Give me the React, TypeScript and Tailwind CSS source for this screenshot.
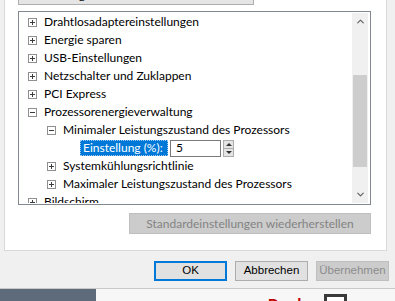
import { ChevronUp, ChevronDown } from "lucide-react";

type Row = { label: string; level: number; open?: boolean; leaf?: boolean };

const rows: Row[] = [
  { label: "Drahtlosadaptereinstellungen", level: 0 },
  { label: "Energie sparen", level: 0 },
  { label: "USB-Einstellungen", level: 0 },
  { label: "Netzschalter und Zuklappen", level: 0 },
  { label: "PCI Express", level: 0 },
  { label: "Prozessorenergieverwaltung", level: 0, open: true },
  { label: "Minimaler Leistungszustand des Prozessors", level: 1, open: true },
  { label: "Einstellung (%):", level: 2, leaf: true },
  { label: "Systemkühlungsrichtlinie", level: 1 },
  { label: "Maximaler Leistungszustand des Prozessors", level: 1 },
  { label: "Bildschirm", level: 0 },
];

function Expander({ open }: { open?: boolean }) {
  return (
    <span className="relative w-[9px] h-[9px] shrink-0 border border-[#8e8f8f] bg-white flex items-center justify-center">
      <span className="absolute w-[5px] h-px bg-[#3c3c3c]" />
      {!open && <span className="absolute w-px h-[5px] bg-[#3c3c3c]" />}
    </span>
  );
}

function Spinner() {
  return (
    <div className="ml-[2px] w-[11px] h-[17px] flex flex-col border border-[#acacac] bg-[#e5e5e5]">
      <div className="flex-1 flex items-center justify-center border-b border-[#acacac]">
        <span className="w-0 h-0 border-x-[3px] border-x-transparent border-b-[3px] border-b-[#333]" />
      </div>
      <div className="flex-1 flex items-center justify-center">
        <span className="w-0 h-0 border-x-[3px] border-x-transparent border-t-[3px] border-t-[#333]" />
      </div>
    </div>
  );
}

function TreeRow({ row }: { row: Row }) {
  if (row.leaf) {
    return (
      <div className="h-[18px] flex items-center pl-[60px] whitespace-nowrap">
        <span className="h-[16px] w-[88px] flex items-center pl-[2px] bg-[#0078d7] text-white border border-dotted border-[#9fc9ee]">
          {row.label}
        </span>
        <div className="ml-[2px] h-[17px] w-[51px] border border-[#7a7a7a] bg-white flex items-center pl-[5px] text-black">
          5
        </div>
        <Spinner />
      </div>
    );
  }
  return (
    <div className="h-[18px] flex items-center whitespace-nowrap" style={{ paddingLeft: 8 + row.level * 19 }}>
      <Expander open={row.open} />
      <span className="ml-[7px] text-black">{row.label}</span>
    </div>
  );
}

function DialogButton({ label, focused, disabled }: { label: string; focused?: boolean; disabled?: boolean }) {
  return (
    <button
      className={
        "w-[73px] h-[20px] flex items-center justify-center text-[11.5px] font-['Liberation_Sans',Arial,sans-serif] " +
        (disabled
          ? "bg-[#cccccc] border border-[#bfbfbf] text-[#8c8c8c]"
          : focused
            ? "bg-[#e1e1e1] border-2 border-[#0078d7] text-black"
            : "bg-[#e1e1e1] border border-[#adadad] text-black")
      }
    >
      {label}
    </button>
  );
}

export default function App() {
  return (
    <div className="w-[395px] h-[301px] overflow-hidden bg-[#f0f0f0] flex flex-col font-['Lato',sans-serif] text-[12px]">
      {/* Registerseite */}
      <div className="ml-[4px] w-[383px] h-[251px] shrink-0 bg-white border-x border-b border-[#d9d9d9] pl-[13px] flex flex-col">
        {/* Kombinationsfeld, oben abgeschnitten */}
        <div className="relative w-[236px] h-[5px] bg-[#e5e5e5] border-x border-b border-[#adadad] overflow-hidden">
          <span className="absolute left-[22px] top-[-14px] text-black">Leistung</span>
        </div>

        {/* Liste */}
        <div className="mt-[6px] w-[353px] h-[194px] border border-[#828790] p-px flex overflow-hidden">
          <div className="flex-1 overflow-hidden">
            {rows.map((r) => (
              <TreeRow key={r.label} row={r} />
            ))}
          </div>
          <div className="w-[16px] mr-px bg-[#f0f0f0] flex flex-col">
            <div className="h-[17px] flex items-center justify-center text-[#606060]">
              <ChevronUp size={11} strokeWidth={2.5} />
            </div>
            <div className="h-[45px]" />
            <div className="h-[92px] mx-[1px] bg-[#cdcdcd]" />
            <div className="flex-1" />
            <div className="h-[17px] flex items-center justify-center text-[#606060]">
              <ChevronDown size={11} strokeWidth={2.5} />
            </div>
          </div>
        </div>

        <div className="mt-[8px] ml-[111px] w-[242px] h-[21px] bg-[#cccccc] border border-[#bfbfbf] text-[#838383] flex items-center justify-center">
          Standardeinstellungen wiederherstellen
        </div>
      </div>

      {/* Schaltflächen */}
      <div className="h-[37px] shrink-0 flex items-start pt-[10px] pl-[154px] gap-[8px]">
        <DialogButton label="OK" focused />
        <DialogButton label="Abbrechen" />
        <DialogButton label="Übernehmen" disabled />
      </div>

      {/* Hintergrund unter dem Dialog */}
      <div className="flex-1 flex border-t border-[#c8c8c8]">
        <div className="w-[96px] bg-[#5e6b7b]" />
        <div className="flex-1 bg-[#f7f7f7] relative overflow-hidden">
          <span className="absolute left-[172px] top-[7px] text-[#c00000] font-bold text-[15px] leading-none font-['Liberation_Sans',sans-serif]">
            Dunke
          </span>
          <span className="absolute left-[228px] top-[5px] w-[23px] h-[20px] border-[3px] border-[#3a3a3a] bg-white" />
        </div>
      </div>
    </div>
  );
}
